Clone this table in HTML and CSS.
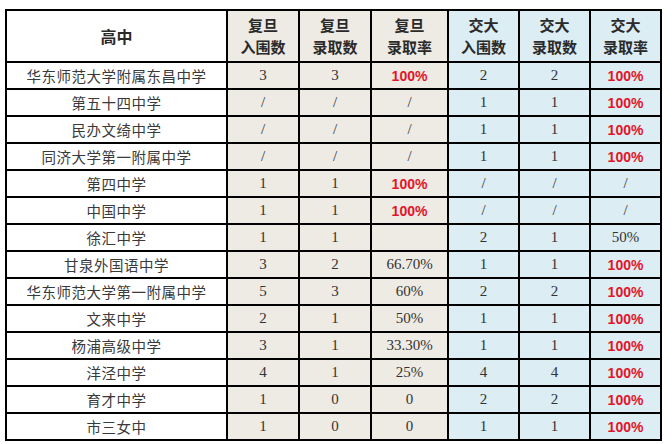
FILE: index.html
```html
<!DOCTYPE html>
<html lang="zh">
<head>
<meta charset="utf-8">
<link rel="stylesheet" href="styles.css">
</head>
<body>
<div class="grid">
  <div class="c h name-h">高中</div>
  <div class="c h fd">复旦<br>入围数</div>
  <div class="c h fd">复旦<br>录取数</div>
  <div class="c h fd">复旦<br>录取率</div>
  <div class="c h jd">交大<br>入围数</div>
  <div class="c h jd">交大<br>录取数</div>
  <div class="c h jd">交大<br>录取率</div>

  <div class="c n">华东师范大学附属东昌中学</div><div class="c fd v">3</div><div class="c fd v">3</div><div class="c fd r">100%</div><div class="c jd v">2</div><div class="c jd v">2</div><div class="c jd r">100%</div>
  <div class="c n">第五十四中学</div><div class="c fd v">/</div><div class="c fd v">/</div><div class="c fd v">/</div><div class="c jd v">1</div><div class="c jd v">1</div><div class="c jd r">100%</div>
  <div class="c n">民办文绮中学</div><div class="c fd v">/</div><div class="c fd v">/</div><div class="c fd v">/</div><div class="c jd v">1</div><div class="c jd v">1</div><div class="c jd r">100%</div>
  <div class="c n">同济大学第一附属中学</div><div class="c fd v">/</div><div class="c fd v">/</div><div class="c fd v">/</div><div class="c jd v">1</div><div class="c jd v">1</div><div class="c jd r">100%</div>
  <div class="c n">第四中学</div><div class="c fd v">1</div><div class="c fd v">1</div><div class="c fd r">100%</div><div class="c jd v">/</div><div class="c jd v">/</div><div class="c jd v">/</div>
  <div class="c n">中国中学</div><div class="c fd v">1</div><div class="c fd v">1</div><div class="c fd r">100%</div><div class="c jd v">/</div><div class="c jd v">/</div><div class="c jd v">/</div>
  <div class="c n">徐汇中学</div><div class="c fd v">1</div><div class="c fd v">1</div><div class="c fd v"></div><div class="c jd v">2</div><div class="c jd v">1</div><div class="c jd v">50%</div>
  <div class="c n">甘泉外国语中学</div><div class="c fd v">3</div><div class="c fd v">2</div><div class="c fd v">66.70%</div><div class="c jd v">1</div><div class="c jd v">1</div><div class="c jd r">100%</div>
  <div class="c n">华东师范大学第一附属中学</div><div class="c fd v">5</div><div class="c fd v">3</div><div class="c fd v">60%</div><div class="c jd v">2</div><div class="c jd v">2</div><div class="c jd r">100%</div>
  <div class="c n">文来中学</div><div class="c fd v">2</div><div class="c fd v">1</div><div class="c fd v">50%</div><div class="c jd v">1</div><div class="c jd v">1</div><div class="c jd r">100%</div>
  <div class="c n">杨浦高级中学</div><div class="c fd v">3</div><div class="c fd v">1</div><div class="c fd v">33.30%</div><div class="c jd v">1</div><div class="c jd v">1</div><div class="c jd r">100%</div>
  <div class="c n">洋泾中学</div><div class="c fd v">4</div><div class="c fd v">1</div><div class="c fd v">25%</div><div class="c jd v">4</div><div class="c jd v">4</div><div class="c jd r">100%</div>
  <div class="c n">育才中学</div><div class="c fd v">1</div><div class="c fd v">0</div><div class="c fd v">0</div><div class="c jd v">2</div><div class="c jd v">2</div><div class="c jd r">100%</div>
  <div class="c n">市三女中</div><div class="c fd v">1</div><div class="c fd v">0</div><div class="c fd v">0</div><div class="c jd v">1</div><div class="c jd v">1</div><div class="c jd r">100%</div>
</div>
</body>
</html>
```
FILE: styles.css
```css
html, body {
  margin: 0;
  padding: 0;
  background: #ffffff;
}
.grid {
  margin: 9px 0 0 5px;
  width: 653px;
  display: grid;
  grid-template-columns: 219px 70px 70px 75px 69px 69px 69px;
  grid-template-rows: 50px repeat(14, 25px);
  gap: 2px;
  padding: 2px;
  background: #000000;
}
.c {
  display: flex;
  align-items: center;
  justify-content: center;
  text-align: center;
  background: #ffffff;
  color: #333333;
  overflow: hidden;
  white-space: nowrap;
}
.fd { background: #eeebe4; }
.jd { background: #dcedf3; }
.h {
  font-family: "Noto Sans CJK SC", sans-serif;
  font-weight: 700;
  font-size: 15px;
  line-height: 22px;
  color: #2a2a2a;
  white-space: normal;
}
.name-h { background: #ffffff; font-size: 16px; }
.n {
  font-family: "Noto Sans CJK SC", sans-serif;
  font-size: 14.5px;
  letter-spacing: 0.5px;
  color: #3a3a3a;
}
.v {
  font-family: "Liberation Serif", serif;
  font-size: 15px;
  color: #333333;
}
.r {
  font-family: "Liberation Sans", sans-serif;
  font-weight: 700;
  font-size: 14px;
  color: #e4142a;
}
```
